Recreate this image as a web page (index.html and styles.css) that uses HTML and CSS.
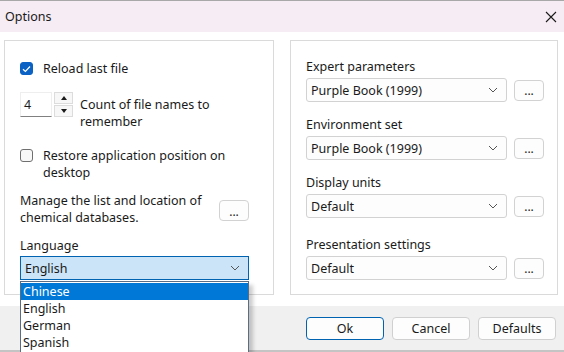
FILE: index.html
```html
<!DOCTYPE html>
<html lang="en">
<head>
    <meta charset="UTF-8">
    <title>Options</title>
    <link rel="stylesheet" href="styles.css">
</head>
<body>
    <div class="window">
        <div class="titlebar">
            <span class="title">Options</span>
            <svg class="close" width="12" height="12" viewBox="0 0 12 12">
                <path d="M1 1 L11 11 M11 1 L1 11" stroke="#1a1a1a" stroke-width="1.1" fill="none"/>
            </svg>
        </div>

        <div class="content">
            <div class="panel left">
                <label class="check-row">
                    <span class="checkbox checked">
                        <svg width="9" height="8" viewBox="0 0 9 8"><path d="M1 4.2 L3.4 6.5 L8 1.5" stroke="#fff" stroke-width="1.2" fill="none"/></svg>
                    </span>
                    <span>Reload last file</span>
                </label>

                <div class="spin-row">
                    <div class="spinner">
                        <div class="spin-input">4</div>
                        <div class="spin-btns">
                            <div class="spin-btn"><span class="tri up"></span></div>
                            <div class="spin-btn"><span class="tri down"></span></div>
                        </div>
                    </div>
                    <span class="spin-text">Count of file names to remember</span>
                </div>

                <label class="check-row wrap">
                    <span class="checkbox"></span>
                    <span>Restore application position on desktop</span>
                </label>

                <div class="manage-row">
                    <span class="manage-text">Manage the list and location of chemical databases.</span>
                    <button class="dots">...</button>
                </div>

                <div class="field-label lang-label">Language</div>
                <div class="lang-wrap">
                    <div class="select active">
                        <span>English</span>
                        <svg class="chev" width="10" height="6" viewBox="0 0 10 6"><path d="M1 1 L5 5 L9 1" stroke="#555" stroke-width="1" fill="none"/></svg>
                    </div>
                    <ul class="dropdown">
                        <li class="selected">Chinese</li>
                        <li>English</li>
                        <li>German</li>
                        <li>Spanish</li>
                    </ul>
                </div>
            </div>

            <div class="panel right">
                <div class="group">
                    <div class="field-label">Expert parameters</div>
                    <div class="select-row">
                        <div class="select">
                            <span>Purple Book (1999)</span>
                            <svg class="chev" width="10" height="6" viewBox="0 0 10 6"><path d="M1 1 L5 5 L9 1" stroke="#555" stroke-width="1" fill="none"/></svg>
                        </div>
                        <button class="dots">...</button>
                    </div>
                </div>
                <div class="group">
                    <div class="field-label">Environment set</div>
                    <div class="select-row">
                        <div class="select">
                            <span>Purple Book (1999)</span>
                            <svg class="chev" width="10" height="6" viewBox="0 0 10 6"><path d="M1 1 L5 5 L9 1" stroke="#555" stroke-width="1" fill="none"/></svg>
                        </div>
                        <button class="dots">...</button>
                    </div>
                </div>
                <div class="group">
                    <div class="field-label">Display units</div>
                    <div class="select-row">
                        <div class="select">
                            <span>Default</span>
                            <svg class="chev" width="10" height="6" viewBox="0 0 10 6"><path d="M1 1 L5 5 L9 1" stroke="#555" stroke-width="1" fill="none"/></svg>
                        </div>
                        <button class="dots">...</button>
                    </div>
                </div>
                <div class="group">
                    <div class="field-label">Presentation settings</div>
                    <div class="select-row">
                        <div class="select">
                            <span>Default</span>
                            <svg class="chev" width="10" height="6" viewBox="0 0 10 6"><path d="M1 1 L5 5 L9 1" stroke="#555" stroke-width="1" fill="none"/></svg>
                        </div>
                        <button class="dots">...</button>
                    </div>
                </div>
            </div>
        </div>

        <div class="footer">
            <button class="btn primary">Ok</button>
            <button class="btn">Cancel</button>
            <button class="btn">Defaults</button>
        </div>
    </div>
</body>
</html>
```

FILE: styles.css
```css
* {
    margin: 0;
    padding: 0;
    box-sizing: border-box;
}

body {
    font-family: 'Noto Sans', 'Open Sans', sans-serif;
    font-size: 12.5px;
    color: #1a1a1a;
    background: #ffffff;
    width: 564px;
    height: 352px;
    overflow: hidden;
}

.window {
    height: 352px;
    display: flex;
    flex-direction: column;
    border-top: 1px solid #a8a8a8;
}

.titlebar {
    height: 31px;
    flex: none;
    background: #f6ecf3;
    display: flex;
    align-items: center;
    justify-content: space-between;
    padding: 0 7px 0 5px;
}

.title {
    font-size: 12.5px;
}

.content {
    display: grid;
    grid-template-columns: 270px 268px;
    column-gap: 16px;
    padding: 8px 6px 0 4px;
    height: 263px;
    flex: none;
}

.panel {
    border: 1px solid #dadada;
    height: 255px;
}

.panel.left {
    padding: 19px 24px 0 15px;
    display: flex;
    flex-direction: column;
}

.check-row {
    display: flex;
    align-items: center;
    gap: 10px;
    line-height: 17px;
}

.check-row.wrap {
    align-items: flex-start;
    margin-top: 17px;
}

.check-row.wrap .checkbox {
    margin-top: 2px;
}

.checkbox {
    width: 13px;
    height: 13px;
    flex: none;
    border: 1px solid #6f6f6f;
    border-radius: 3px;
    background: #f8f8f8;
    display: flex;
    align-items: center;
    justify-content: center;
}

.checkbox.checked {
    background: #0b62c4;
    border-color: #0b62c4;
}

.spin-row {
    display: flex;
    align-items: flex-start;
    gap: 7px;
    margin-top: 15px;
}

.spinner {
    display: flex;
    gap: 2px;
    flex: none;
}

.spin-input {
    width: 32px;
    height: 25px;
    border: 1px solid #eeeeee;
    border-bottom: 1px solid #808080;
    padding: 3px 0 0 3px;
    line-height: 17px;
}

.spin-btns {
    display: flex;
    flex-direction: column;
    gap: 1px;
    width: 19px;
}

.spin-btn {
    height: 12px;
    border: 1px solid #dcdcdc;
    background: #f7f7f7;
    display: flex;
    align-items: center;
    justify-content: center;
}

.tri {
    width: 0;
    height: 0;
    border-left: 3.5px solid transparent;
    border-right: 3.5px solid transparent;
}

.tri.up {
    border-bottom: 4px solid #1a1a1a;
}

.tri.down {
    border-top: 4px solid #1a1a1a;
}

.spin-text {
    line-height: 17px;
    padding-top: 4px;
    width: 145px;
}

.manage-row {
    display: flex;
    align-items: flex-start;
    justify-content: space-between;
    margin-top: 11px;
}

.manage-text {
    line-height: 17px;
    width: 190px;
}

.dots {
    width: 30px;
    height: 21px;
    border: 1px solid #d2d2d2;
    border-radius: 4px;
    background: #fdfdfd;
    font-family: inherit;
    font-size: 12px;
    line-height: 12px;
    padding-top: 2px;
    color: #1a1a1a;
}

.manage-row .dots {
    margin-top: 8px;
}

.field-label {
    line-height: 17px;
}

.lang-label {
    margin-top: 11px;
}

.lang-wrap {
    position: relative;
    margin-top: 2px;
}

.select {
    height: 24px;
    border: 1px solid #d2d2d2;
    border-radius: 3px;
    background: #fdfdfd;
    display: flex;
    align-items: center;
    justify-content: space-between;
    padding: 0 8px 0 4px;
}

.select.active {
    background: #cce4f7;
    border-color: #0063b1;
    border-radius: 0;
}

.dropdown {
    position: absolute;
    top: 25px;
    left: 0;
    right: 0;
    list-style: none;
    background: #ffffff;
    border: 1px solid #5a6d85;
    box-shadow: 4px 4px 4px rgba(0, 0, 0, 0.2);
    padding: 1px 0;
    z-index: 2;
}

.dropdown li {
    height: 17px;
    line-height: 17px;
    padding-left: 2px;
}

.dropdown li.selected {
    background: #0078d7;
    color: #ffffff;
}

.panel.right {
    padding: 17px 13px 0 15px;
}

.group {
    margin-bottom: 14px;
}

.group:nth-child(3) {
    margin-bottom: 18px;
}

.select-row {
    display: flex;
    align-items: center;
    gap: 7px;
    margin-top: 3px;
}

.select-row .select {
    width: 201px;
}

.footer {
    flex: 1;
    background: #f0f0f0;
    border-bottom: 2px solid #c4c4c4;
    display: flex;
    justify-content: flex-end;
    align-items: flex-start;
    gap: 8px;
    padding: 11px 8px 0 0;
    margin-top: 11px;
}

.btn {
    width: 78px;
    height: 23px;
    border: 1px solid #d0d0d0;
    border-radius: 4px;
    background: #fdfdfd;
    font-family: inherit;
    font-size: 12.5px;
    color: #1a1a1a;
}

.btn.primary {
    border-color: #0063b1;
}
```
